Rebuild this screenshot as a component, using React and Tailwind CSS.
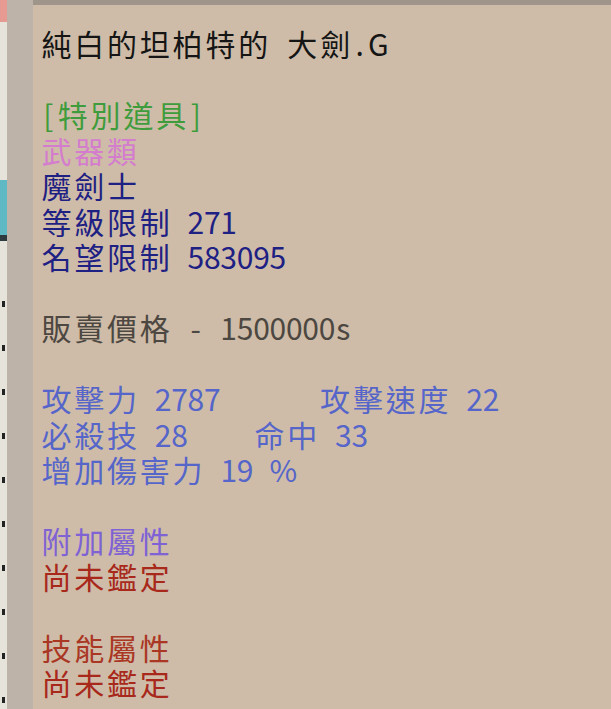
import React from "react";

const FULL = "inline-block w-[32.8px] text-center";
const HALF = "inline-block w-[16.4px] text-center";

function Mono({ text }) {
  return (
    <>
      {Array.from(text).map((ch, i) => (
        <span key={i} className={ch.charCodeAt(0) < 0x2000 ? HALF : FULL}>
          {ch === " " ? "\u00a0" : ch}
        </span>
      ))}
    </>
  );
}

function Line({ text, color }) {
  return (
    <div className={"h-[35.5px] leading-[35.5px] whitespace-nowrap " + color}>
      {text ? <Mono text={text} /> : null}
    </div>
  );
}

const lines = [
  ["純白的坦柏特的 大劍.G", "text-[#151515]"],
  ["", ""],
  ["[特別道具]", "text-[#3f9c3c]"],
  ["武器類", "text-[#d47ccd]"],
  ["魔劍士", "text-[#1e2083]"],
  ["等級限制 271", "text-[#1e2083]"],
  ["名望限制 583095", "text-[#1e2083]"],
  ["", ""],
  ["販賣價格 - 1500000s", "text-[#4d4741]"],
  ["", ""],
  ["攻擊力 2787      攻擊速度 22", "text-[#5565c9]"],
  ["必殺技 28    命中 33", "text-[#5565c9]"],
  ["增加傷害力 19 %", "text-[#5565c9]"],
  ["", ""],
  ["附加屬性", "text-[#7f62d4]"],
  ["尚未鑑定", "text-[#a8281b]"],
  ["", ""],
  ["技能屬性", "text-[#aa3624]"],
  ["尚未鑑定", "text-[#a8281b]"],
];

export default function App() {
  return (
    <div className="w-[611px] h-[709px] overflow-hidden flex bg-[#cebca8] font-['Noto_Sans_CJK_TC','Noto_Sans_CJK_SC',sans-serif] text-[30px]">
      {/* game background sliver on the left */}
      <div className="w-[7px] h-full bg-[#e6e3da] flex flex-col">
        <div className="h-[22px] bg-[#e79a92]" />
        <div className="h-[158px]" />
        <div className="h-[55px] bg-[#5fb9c4]" />
        <div className="h-[6px] bg-[#2d3b40]" />
        <div className="flex-1 flex flex-col items-center gap-[38px] pt-[60px]">
          <div className="w-[3px] h-[6px] bg-[#222]" />
          <div className="w-[3px] h-[6px] bg-[#222]" />
          <div className="w-[3px] h-[6px] bg-[#222]" />
          <div className="w-[3px] h-[6px] bg-[#222]" />
          <div className="w-[3px] h-[6px] bg-[#222]" />
          <div className="w-[3px] h-[6px] bg-[#222]" />
          <div className="w-[3px] h-[6px] bg-[#222]" />
          <div className="w-[3px] h-[6px] bg-[#222]" />
          <div className="w-[3px] h-[6px] bg-[#222]" />
          <div className="w-[3px] h-[6px] bg-[#222]" />
        </div>
      </div>
      {/* grey border column */}
      <div className="w-[26px] h-full bg-[#bdb3a8]" />
      {/* tooltip panel */}
      <div className="flex-1 flex flex-col">
        <div className="h-[5px] bg-[#9f958b]" />
        <div className="pl-[7px] pt-[21px]">
          {lines.map(([t, c], i) => (
            <Line key={i} text={t} color={c} />
          ))}
        </div>
      </div>
    </div>
  );
}
